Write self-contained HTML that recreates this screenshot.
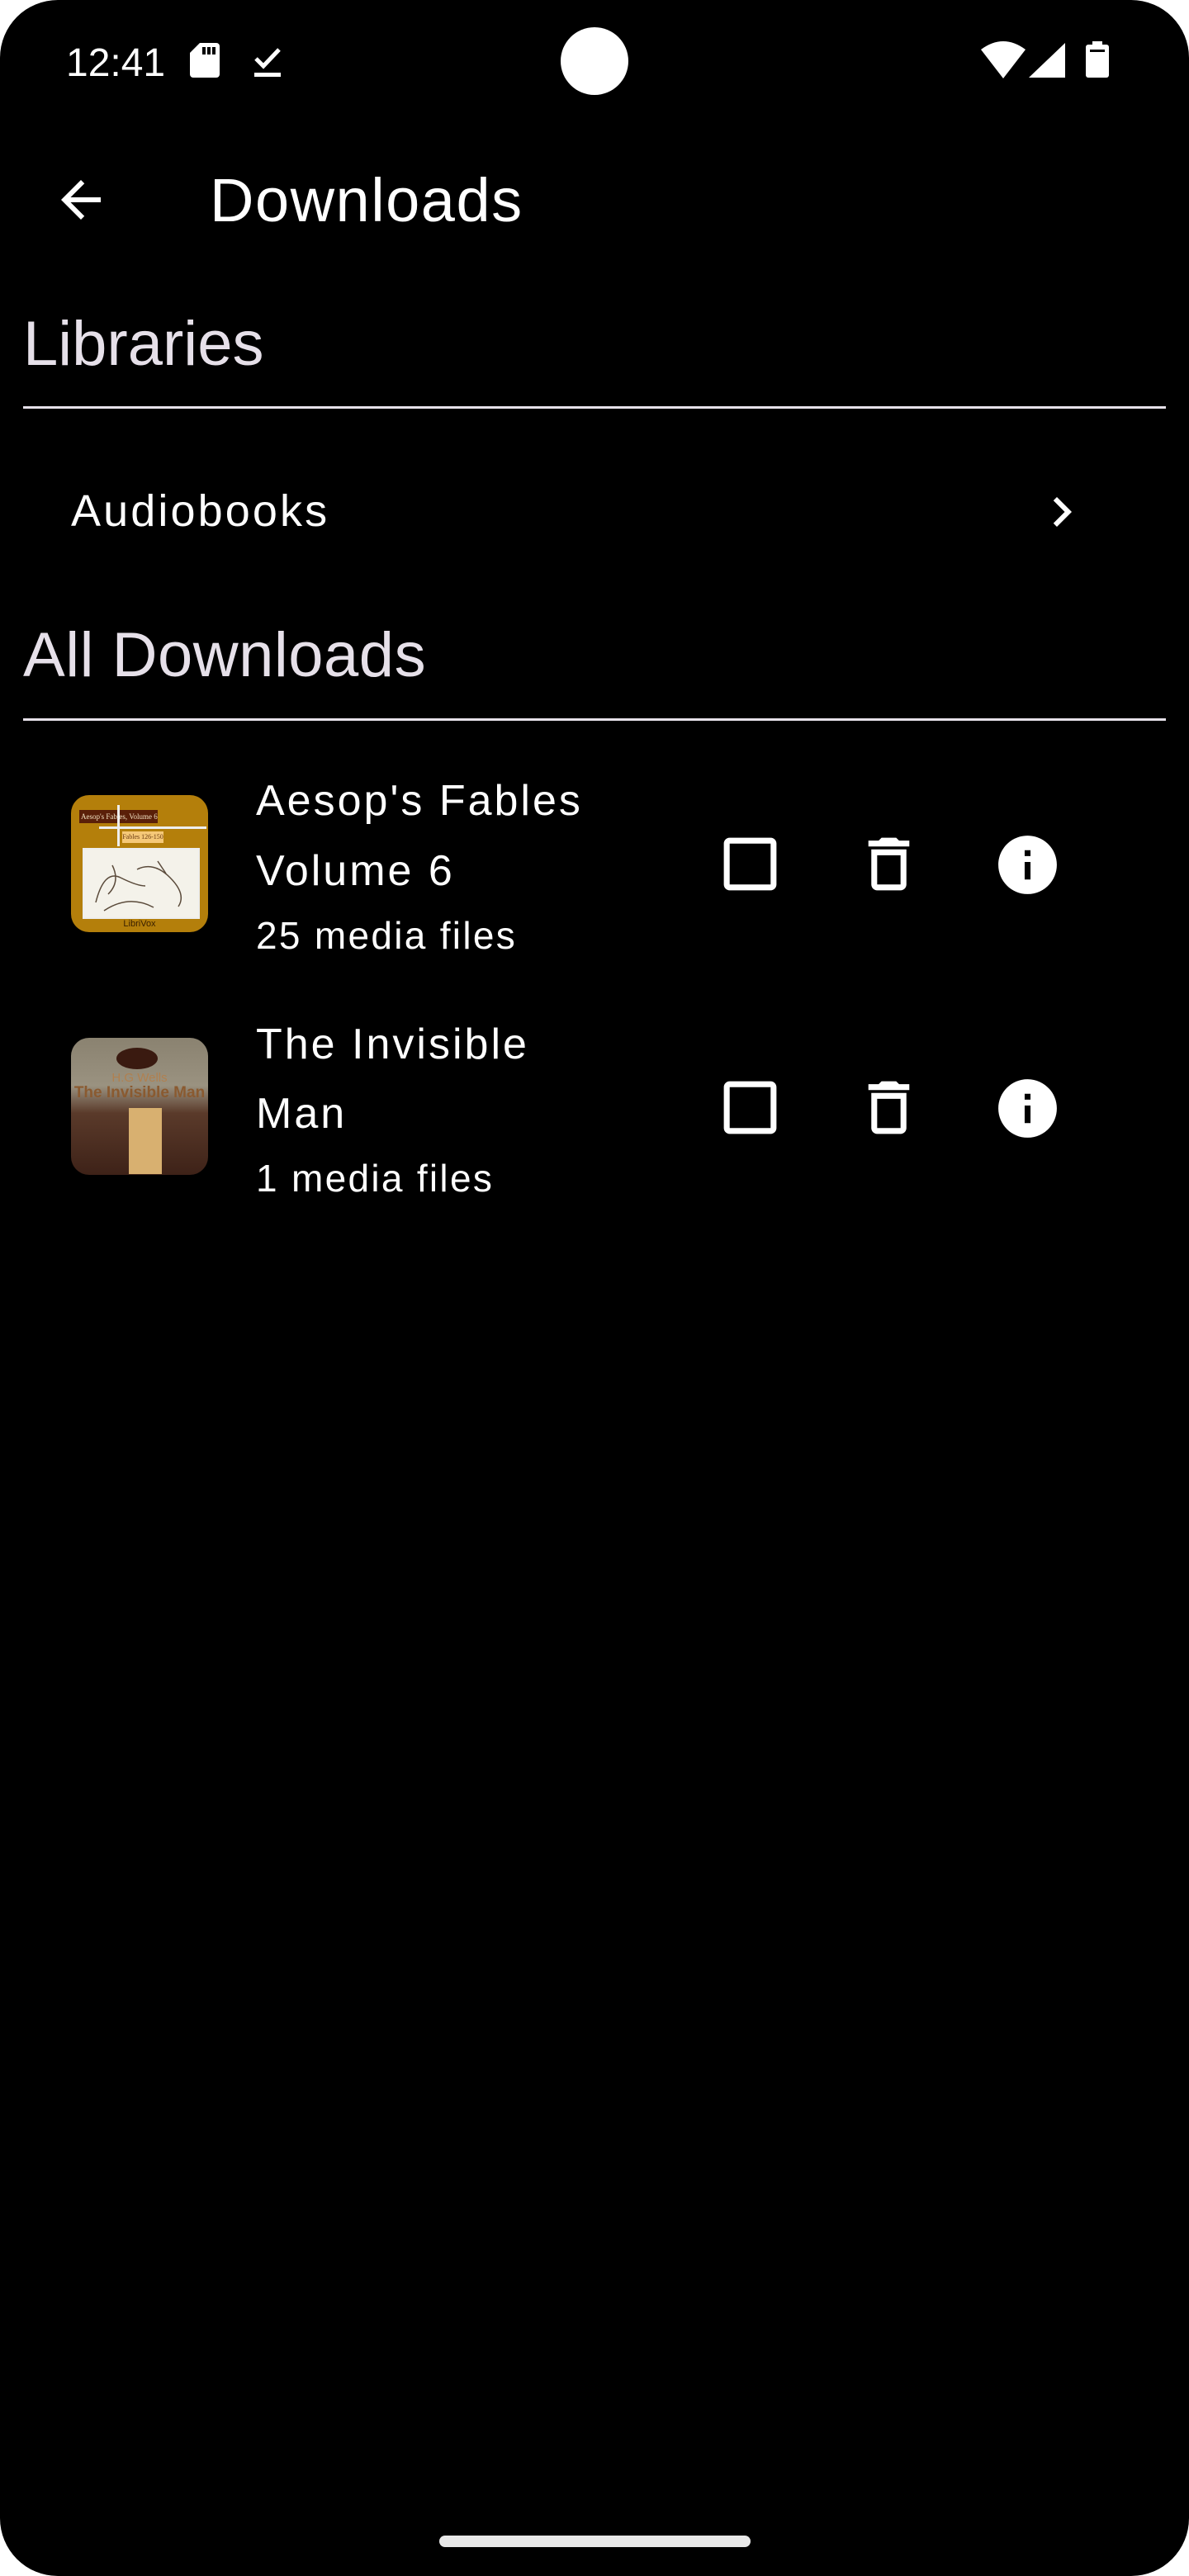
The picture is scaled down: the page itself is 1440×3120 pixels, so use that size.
<!DOCTYPE html>
<html><head><meta charset="utf-8">
<style>
*{margin:0;padding:0;box-sizing:border-box}
html,body{width:1440px;height:3120px;background:#fff;overflow:hidden}
#s{position:absolute;left:0;top:0;width:1440px;height:3120px;background:#000;border-radius:70px;overflow:hidden;font-family:"Liberation Sans",sans-serif;color:#fff}
.t{position:absolute;line-height:1;white-space:nowrap}
.ln{position:absolute;left:28px;width:1384px;height:3px;background:#e6e0e9}
svg{position:absolute}
</style></head><body><div id="s">
<div class="t" style="left:80px;top:53px;font-size:48px">12:41</div>
<svg style="left:230px;top:52px" width="36" height="42" viewBox="0 0 36 42"><path d="M12 0H32a4 4 0 0 1 4 4V38a4 4 0 0 1-4 4H4a4 4 0 0 1-4-4V12z" fill="#fff"/><rect x="15" y="5" width="4" height="9" fill="#000"/><rect x="21" y="5" width="4" height="9" fill="#000"/><rect x="27" y="5" width="4" height="9" fill="#000"/></svg>
<svg style="left:306px;top:56px" width="36" height="38" viewBox="0 0 36 38"><path d="M4 15l9 9L32 4" stroke="#fff" stroke-width="5" fill="none"/><rect x="2" y="32" width="32" height="5" fill="#fff"/></svg>
<div style="position:absolute;left:679px;top:33px;width:82px;height:82px;border-radius:50%;background:#fff"></div>
<svg style="left:1188px;top:50px" width="54" height="45" viewBox="0 0 54 45"><path d="M0 10Q27-10 54 10L27 45z" fill="#fff"/></svg>
<svg style="left:1246px;top:52px" width="44" height="42"><path d="M44 0V42H0z" fill="#fff"/></svg>
<svg style="left:1315px;top:50px" width="28" height="44"><rect x="8" y="0" width="12" height="5" fill="#fff"/><rect x="0" y="4" width="28" height="40" rx="3" fill="#fff"/><rect x="5" y="10" width="18" height="3" fill="#000"/></svg>

<svg style="left:62px;top:206px" width="72" height="72" viewBox="0 0 24 24"><path d="M20 11H7.83l5.59-5.59L12 4l-8 8 8 8 1.41-1.41L7.83 13H20v-2z" fill="#fff"/></svg>
<div class="t" style="left:254px;top:206px;font-size:74px;letter-spacing:1.5px">Downloads</div>

<div class="t" style="left:28px;top:379px;font-size:76px;color:#e6e0e9">Libraries</div>
<div class="ln" style="top:492px"></div>
<div class="t" style="left:86px;top:592px;font-size:54px;letter-spacing:3.1px">Audiobooks</div>
<svg style="left:1250px;top:584px" width="72" height="72" viewBox="0 0 24 24"><path d="M8.59 16.59L13.17 12 8.59 7.41 10 6l6 6-6 6-1.41-1.41z" fill="#fff"/></svg>
<div class="t" style="left:28px;top:756px;font-size:76px;color:#e6e0e9;letter-spacing:0.5px">All Downloads</div>
<div class="ln" style="top:870px"></div>

<div style="position:absolute;left:86px;top:963px;width:166px;height:166px;border-radius:22px;background:#b47f0b;overflow:hidden">
 <div style="position:absolute;left:10px;top:18px;width:95px;height:16px;background:#5a1f08;color:#f0e0c0;font:9px 'Liberation Serif',serif;line-height:16px;padding-left:2px">Aesop's Fables, Volume 6</div>
 <div style="position:absolute;left:34px;top:38px;width:130px;height:3px;background:#eee"></div>
 <div style="position:absolute;left:56px;top:12px;width:3px;height:50px;background:#eee"></div>
 <div style="position:absolute;left:62px;top:44px;width:50px;height:14px;background:#f5c878;color:#6a3a10;font:8px 'Liberation Serif',serif;line-height:14px;text-align:center">Fables 126-150</div>
 <div style="position:absolute;left:14px;top:64px;width:142px;height:86px;background:#f4f2ea;border:2px solid #eee"></div>
 <svg style="left:20px;top:70px" width="130" height="76" viewBox="0 0 130 76"><path d="M10 60Q20 20 40 30T70 40M60 20Q80 10 100 30T110 65M20 70Q50 50 80 66M85 10l10 15M30 15q10 20 -5 35" stroke="#5a4a3a" stroke-width="1.5" fill="none"/></svg>
 <div style="position:absolute;left:0;top:150px;width:166px;text-align:center;font-size:11px;color:#3a2000">LibriVox</div>
</div>
<div class="t" style="left:310px;top:944px;font-size:52px;letter-spacing:3px">Aesop's Fables</div>
<div class="t" style="left:310px;top:1029px;font-size:52px;letter-spacing:3px">Volume 6</div>
<div class="t" style="left:310px;top:1110px;font-size:46px;letter-spacing:2.3px">25 media files</div>

<div style="position:absolute;left:86px;top:1257px;width:166px;height:166px;border-radius:22px;overflow:hidden;background:linear-gradient(180deg,#8a8270 0%,#9a9280 35%,#5a3a2a 55%,#3e2218 100%)">
 <div style="position:absolute;left:55px;top:12px;width:50px;height:26px;border-radius:50%;background:#3a1a10"></div>
 <div style="position:absolute;left:0;top:40px;width:166px;text-align:center;font-size:15px;color:#b08050">H.G Wells</div>
 <div style="position:absolute;left:0;top:56px;width:166px;text-align:center;font-size:19px;color:#8a5a30;font-weight:bold">The Invisible Man</div>
 <div style="position:absolute;left:70px;top:85px;width:40px;height:80px;background:#d8b070"></div>
</div>
<div class="t" style="left:310px;top:1239px;font-size:52px;letter-spacing:3px">The Invisible</div>
<div class="t" style="left:310px;top:1323px;font-size:52px;letter-spacing:3px">Man</div>
<div class="t" style="left:310px;top:1404px;font-size:46px;letter-spacing:2.3px">1 media files</div>

<svg style="left:866px;top:1004px" width="85" height="85" viewBox="0 0 24 24"><path d="M19 5v14H5V5h14m0-2H5c-1.1 0-2 .9-2 2v14c0 1.1.9 2 2 2h14c1.1 0 2-.9 2-2V5c0-1.1-.9-2-2-2z" fill="#fff"/></svg>
<svg style="left:1034px;top:1004px" width="85" height="85" viewBox="0 0 24 24"><path d="M6 19c0 1.1.9 2 2 2h8c1.1 0 2-.9 2-2V7H6v12zM8 9h8v10H8V9zm7.5-5l-1-1h-5l-1 1H5v2h14V4z" fill="#fff"/></svg>
<svg style="left:1202px;top:1005px" width="85" height="85" viewBox="0 0 24 24"><path d="M12 2C6.48 2 2 6.48 2 12s4.48 10 10 10 10-4.48 10-10S17.52 2 12 2zm1 15h-2v-6h2v6zm0-8h-2V7h2v2z" fill="#fff"/></svg>

<svg style="left:866px;top:1299px" width="85" height="85" viewBox="0 0 24 24"><path d="M19 5v14H5V5h14m0-2H5c-1.1 0-2 .9-2 2v14c0 1.1.9 2 2 2h14c1.1 0 2-.9 2-2V5c0-1.1-.9-2-2-2z" fill="#fff"/></svg>
<svg style="left:1034px;top:1299px" width="85" height="85" viewBox="0 0 24 24"><path d="M6 19c0 1.1.9 2 2 2h8c1.1 0 2-.9 2-2V7H6v12zM8 9h8v10H8V9zm7.5-5l-1-1h-5l-1 1H5v2h14V4z" fill="#fff"/></svg>
<svg style="left:1202px;top:1300px" width="85" height="85" viewBox="0 0 24 24"><path d="M12 2C6.48 2 2 6.48 2 12s4.48 10 10 10 10-4.48 10-10S17.520 2 12 2zm1 15h-2v-6h2v6zm0-8h-2V7h2v2z" fill="#fff"/></svg>

<div style="position:absolute;left:532px;top:3071px;width:377px;height:14px;border-radius:7px;background:#e8e8e8"></div>
</div></body></html>
